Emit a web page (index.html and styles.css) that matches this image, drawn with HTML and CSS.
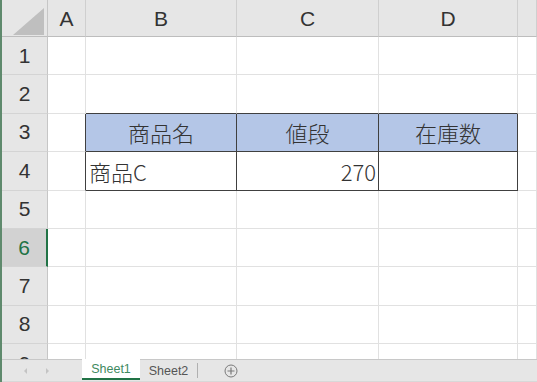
FILE: index.html
```html
<!DOCTYPE html>
<html>
<head>
  <title>Book1</title>
  <meta charset="UTF-8">
  <link rel="stylesheet" href="styles.css">
</head>
<body>
  <div class="sheet">
    <div class="grid">
      <div class="corner"><span class="tri"></span></div>
      <div class="colhead">A</div>
      <div class="colhead">B</div>
      <div class="colhead">C</div>
      <div class="colhead">D</div>
      <div class="colhead"></div>

      <div class="rowhead">1</div>
      <div class="cell"></div><div class="cell"></div><div class="cell"></div><div class="cell"></div><div class="cell"></div>

      <div class="rowhead">2</div>
      <div class="cell"></div><div class="cell top"></div><div class="cell top"></div><div class="cell top"></div><div class="cell"></div>

      <div class="rowhead">3</div>
      <div class="cell left"></div>
      <div class="cell tb head">商品名</div>
      <div class="cell tb head">値段</div>
      <div class="cell tb head">在庫数</div>
      <div class="cell"></div>

      <div class="rowhead">4</div>
      <div class="cell left"></div>
      <div class="cell tb text">商品C</div>
      <div class="cell tb num">270</div>
      <div class="cell tb"></div>
      <div class="cell"></div>

      <div class="rowhead">5</div>
      <div class="cell"></div><div class="cell"></div><div class="cell"></div><div class="cell"></div><div class="cell"></div>

      <div class="rowhead selected">6</div>
      <div class="cell"></div><div class="cell"></div><div class="cell"></div><div class="cell"></div><div class="cell"></div>

      <div class="rowhead">7</div>
      <div class="cell"></div><div class="cell"></div><div class="cell"></div><div class="cell"></div><div class="cell"></div>

      <div class="rowhead">8</div>
      <div class="cell"></div><div class="cell"></div><div class="cell"></div><div class="cell"></div><div class="cell"></div>

      <div class="rowhead last">9</div>
      <div class="cell"></div><div class="cell"></div><div class="cell"></div><div class="cell"></div><div class="cell"></div>
    </div>
  </div>

  <div class="tabs">
    <div class="nav">
      <span class="arrow prev"></span>
      <span class="arrow next"></span>
    </div>
    <div class="tab active">Sheet1</div>
    <div class="tab">Sheet2</div>
    <div class="add">
      <svg width="14" height="14" viewBox="0 0 14 14">
        <circle cx="7" cy="7" r="6" fill="none" stroke="#7a7a7a" stroke-width="1"/>
        <path d="M7 3.5v7M3.5 7h7" stroke="#7a7a7a" stroke-width="1.2"/>
      </svg>
    </div>
  </div>
</body>
</html>
```

FILE: styles.css
```css
/* Reset */
* {
  margin: 0;
  padding: 0;
  box-sizing: border-box;
}

body {
  width: 537px;
  height: 382px;
  overflow: hidden;
  background-color: #fff;
  font-family: 'Liberation Sans', 'Noto Sans CJK JP', sans-serif;
  color: #333;
  border-left: 2px solid #5f8a6d;
}

/* Sheet grid */
.sheet {
  height: 359px;
  overflow: hidden;
}

.grid {
  display: grid;
  grid-template-columns: 46px 38px 151px 142px 139px 1fr;
  grid-template-rows: 37px repeat(9, 38.4px);
}

.corner {
  background-color: #e6e6e6;
  border-right: 1px solid #c6c6c6;
  border-bottom: 1px solid #bdbdbd;
  position: relative;
}

.corner .tri {
  position: absolute;
  left: 11px;
  top: 8px;
  width: 0;
  height: 0;
  border-left: 31px solid transparent;
  border-bottom: 27px solid #bfbfbf;
}

.colhead {
  background-color: #e6e6e6;
  border-right: 1px solid #cfcfcf;
  border-bottom: 1px solid #bdbdbd;
  display: flex;
  align-items: center;
  justify-content: center;
  font-size: 21px;
  padding-top: 2px;
}

.rowhead {
  background-color: #e6e6e6;
  border-right: 1px solid #c6c6c6;
  border-bottom: 1px solid #d4d4d4;
  display: flex;
  align-items: center;
  justify-content: center;
  font-size: 21px;
}

.rowhead.selected {
  background-color: #d2d2d2;
  color: #217346;
  border-right: 2px solid #217346;
}

.rowhead.last {
  align-items: flex-start;
  padding-top: 8px;
}

.cell {
  border-right: 1px solid #e1e1e1;
  border-bottom: 1px solid #e1e1e1;
  display: flex;
  align-items: center;
  font-size: 22px;
  font-weight: 300;
  font-family: 'Noto Sans CJK JP', sans-serif;
  color: #333;
}

.cell.top {
  border-bottom-color: #404040;
}

.cell.left {
  border-right-color: #404040;
}

.cell.tb {
  border-right-color: #404040;
  border-bottom-color: #404040;
}

.cell.head {
  background-color: #b4c6e7;
  justify-content: center;
}

.cell.text {
  padding-left: 3px;
}

.cell.num {
  justify-content: flex-end;
  padding-right: 2px;
}

/* Sheet tabs */
.tabs {
  height: 23px;
  background-color: #e6e6e6;
  border-top: 1px solid #c8c8c8;
  border-bottom: 1px solid #d8d8d8;
  display: flex;
  align-items: stretch;
  font-family: 'Liberation Sans', sans-serif;
  font-size: 12.5px;
}

.nav {
  width: 80px;
  display: flex;
  align-items: center;
  gap: 19px;
  padding-left: 22px;
}

.arrow {
  width: 0;
  height: 0;
  border-top: 3px solid transparent;
  border-bottom: 3px solid transparent;
}

.arrow.prev {
  border-right: 3px solid #c4c4c4;
}

.arrow.next {
  border-left: 3px solid #c4c4c4;
}

.tab {
  width: 58px;
  display: flex;
  align-items: center;
  justify-content: center;
  color: #555;
  border-right: 1px solid #b0b0b0;
  margin: 3px 0 3px;
}

.tab.active {
  background-color: #fff;
  color: #3f8a5f;
  margin: -1px 0 1px;
  border-right: none;
  border-bottom: 2px solid #217346;
}

.add {
  width: 66px;
  display: flex;
  align-items: center;
  justify-content: center;
}
```
